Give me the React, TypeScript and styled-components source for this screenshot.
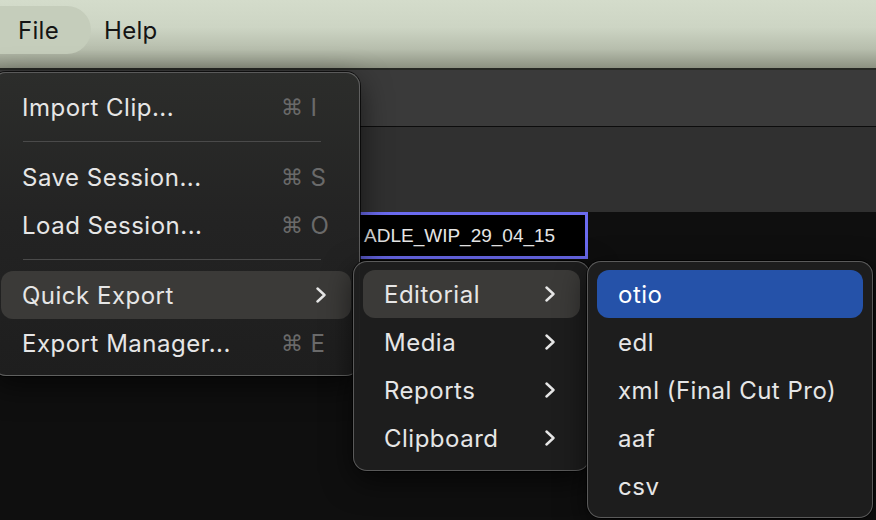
import styled, { createGlobalStyle } from 'styled-components';

const GlobalStyle = createGlobalStyle`
  html, body {
    margin: 0;
    padding: 0;
    background: #0f0f0f;
  }
  body {
    width: 876px;
    height: 520px;
    overflow: hidden;
    font-family: Inter, "Liberation Sans", sans-serif;
  }
`;

type MenuItem = {
  label: string;
  shortcut?: string;
  submenu?: boolean;
  active?: boolean;
  selected?: boolean;
  separatorBefore?: boolean;
};

const fileItems: MenuItem[] = [
  { label: 'Import Clip...', shortcut: 'I' },
  { label: 'Save Session...', shortcut: 'S', separatorBefore: true },
  { label: 'Load Session...', shortcut: 'O' },
  { label: 'Quick Export', submenu: true, active: true, separatorBefore: true },
  { label: 'Export Manager...', shortcut: 'E' },
];

const exportItems: MenuItem[] = [
  { label: 'Editorial', submenu: true, active: true },
  { label: 'Media', submenu: true },
  { label: 'Reports', submenu: true },
  { label: 'Clipboard', submenu: true },
];

const editorialItems: MenuItem[] = [
  { label: 'otio', selected: true },
  { label: 'edl' },
  { label: 'xml (Final Cut Pro)' },
  { label: 'aaf' },
  { label: 'csv' },
];

function Chevron() {
  return (
    <ChevronSvg width="12" height="16" viewBox="0 0 12 16">
      <polyline
        points="2.5,1.5 9.5,8 2.5,14.5"
        fill="none"
        stroke="currentColor"
        strokeWidth="2.4"
        strokeLinecap="round"
        strokeLinejoin="round"
      />
    </ChevronSvg>
  );
}

function Menu({ items, className }: { items: MenuItem[]; className?: string }) {
  return (
    <MenuPanel className={className}>
      {items.map((item) => (
        <div key={item.label}>
          {item.separatorBefore && <Separator />}
          <Row $active={item.active} $selected={item.selected}>
            <span>{item.label}</span>
            {item.shortcut && (
              <Shortcut>
                <Cmd>⌘</Cmd>
                {item.shortcut}
              </Shortcut>
            )}
            {item.submenu && <Chevron />}
          </Row>
        </div>
      ))}
    </MenuPanel>
  );
}

export default function App() {
  return (
    <>
      <GlobalStyle />
      <Screen>
        <MenuBar>
          <BarItem $open>File</BarItem>
          <BarItem>Help</BarItem>
        </MenuBar>
        <Workspace>
          <Toolbar />
          <InfoPanel />
          <Viewer>
            <ClipTitle>ADLE_WIP_29_04_15</ClipTitle>
          </Viewer>
        </Workspace>

        <FileMenu items={fileItems} />
        <ExportMenu items={exportItems} />
        <EditorialMenu items={editorialItems} />
      </Screen>
    </>
  );
}

const Screen = styled.div`
  position: relative;
  display: flex;
  flex-direction: column;
  width: 876px;
  height: 520px;
  overflow: hidden;
  background: #0f0f0f;
`;

const MenuBar = styled.div`
  display: flex;
  align-items: center;
  height: 70px;
  padding: 0 0 8px 0;
  box-sizing: border-box;
  background: linear-gradient(
    180deg,
    #d4dccb 0%,
    #cdd5c4 40%,
    #b7bead 72%,
    #8c9181 100%
  );
  border-bottom: 2px solid #262824;
`;

const BarItem = styled.div<{ $open?: boolean }>`
  display: flex;
  align-items: center;
  height: 48px;
  padding: ${(p) => (p.$open ? '0 32px 0 18px' : '0 13px')};
  border-radius: 0 24px 24px 0;
  font-size: 24px;
  letter-spacing: 0.3px;
  color: #141414;
  background: ${(p) => (p.$open ? '#c5cdbb' : 'transparent')};
`;

const Workspace = styled.div`
  display: flex;
  flex-direction: column;
  flex: 1;
`;

const Toolbar = styled.div`
  height: 56px;
  background: #3a3a3a;
  border-bottom: 1px solid #0c0c0c;
`;

const InfoPanel = styled.div`
  height: 85px;
  background: #303030;
`;

const Viewer = styled.div`
  flex: 1;
  background: #0f0f0f;
`;

const ClipTitle = styled.div`
  display: flex;
  align-items: center;
  width: 258px;
  height: 47px;
  margin-left: 330px;
  padding-left: 31px;
  box-sizing: border-box;
  background: #000;
  border: 3px solid #6b6bf0;
  font-family: "Liberation Sans", sans-serif;
  font-size: 19px;
  color: #e6e6e6;
`;

const MenuPanel = styled.div`
  position: absolute;
  box-sizing: border-box;
  padding: 8px 9px;
  border-radius: 14px;
  background: rgba(30, 30, 30, 0.97);
  border: 1px solid rgba(140, 140, 140, 0.55);
  box-shadow: 0 0 0 1px rgba(0, 0, 0, 0.7), 0 10px 30px rgba(0, 0, 0, 0.6);
`;

const FileMenu = styled(Menu)`
  left: -8px;
  top: 72px;
  width: 368px;
  padding: 10px 8px 8px;
  background: linear-gradient(180deg, #2c2d2b 0%, #232323 50%, #1e1e1e 100%);
`;

const ExportMenu = styled(Menu)`
  left: 353px;
  top: 261px;
  width: 237px;
  height: 210px;
`;

const EditorialMenu = styled(Menu)`
  left: 587px;
  top: 261px;
  width: 286px;
  height: 257px;
`;

const Row = styled.div<{ $active?: boolean; $selected?: boolean }>`
  display: flex;
  align-items: center;
  justify-content: space-between;
  height: 48px;
  padding: 0 24px 0 21px;
  border-radius: 12px;
  font-size: 24px;
  letter-spacing: 0.5px;
  color: ${(p) => (p.$selected ? '#ffffff' : '#e6e6e6')};
  background: ${(p) =>
    p.$selected ? '#2552a9' : p.$active ? '#3b3a38' : 'transparent'};
`;

const Separator = styled.div`
  height: 1px;
  margin: 10px 30px 11px 22px;
  background: #4a4a4a;
`;

const Shortcut = styled.span`
  display: flex;
  align-items: center;
  gap: 7px;
  width: 46px;
  color: #6a6a6a;
`;

const Cmd = styled.span`
  font-family: "DejaVu Sans", sans-serif;
  font-size: 22px;
`;

const ChevronSvg = styled.svg`
  color: #e6e6e6;
  flex-shrink: 0;
`;
